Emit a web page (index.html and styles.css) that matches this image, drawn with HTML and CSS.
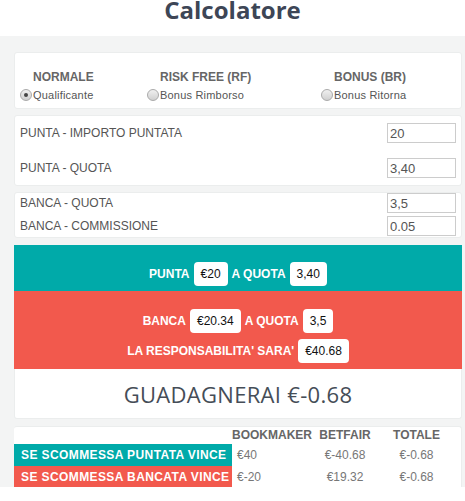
FILE: index.html
```html
<html lang="it">
<head>
    <meta charset="utf-8">
    <link rel="stylesheet" href="styles.css">
</head>
<body>
<div class="top">
    <h1>Calcolatore</h1>
</div>

<div class="calc">

    <div class="panel modes">
        <label class="mode m1">
            <b>NORMALE</b>
            <span><i class="radio on"></i>Qualificante</span>
        </label>
        <label class="mode m2">
            <b>RISK FREE (RF)</b>
            <span><i class="radio"></i>Bonus Rimborso</span>
        </label>
        <label class="mode m3">
            <b>BONUS (BR)</b>
            <span><i class="radio"></i>Bonus Ritorna</span>
        </label>
    </div>

    <div class="panel fields punta">
        <div class="row"><span>PUNTA - IMPORTO PUNTATA</span><input value="20"></div>
        <div class="row"><span>PUNTA - QUOTA</span><input value="3,40"></div>
    </div>

    <div class="panel fields banca">
        <div class="row"><span>BANCA - QUOTA</span><input value="3,5"></div>
        <div class="row"><span>BANCA - COMMISSIONE</span><input value="0.05"></div>
    </div>

    <div class="band teal">
        <div class="line">PUNTA <span class="pill">€20</span> A QUOTA <span class="pill">3,40</span></div>
    </div>
    <div class="band red">
        <div class="line">BANCA <span class="pill">€20.34</span> A QUOTA <span class="pill">3,5</span></div>
        <div class="line">LA RESPONSABILITA' SARA' <span class="pill">€40.68</span></div>
    </div>

    <div class="panel profit">GUADAGNERAI €-0.68</div>

    <div class="panel results">
        <div></div>
        <div class="th first">BOOKMAKER</div>
        <div class="th">BETFAIR</div>
        <div class="th">TOTALE</div>

        <div class="lab teal">SE SCOMMESSA PUNTATA VINCE</div>
        <div class="td first">€40</div>
        <div class="td">€-40.68</div>
        <div class="td">€-0.68</div>

        <div class="lab red">SE SCOMMESSA BANCATA VINCE</div>
        <div class="td first">€-20</div>
        <div class="td">€19.32</div>
        <div class="td">€-0.68</div>
    </div>

</div>
</body>
</html>
```

FILE: styles.css
```css
body {
    margin: 0;
    background: #fff;
    font-family: "Liberation Sans", Arial, sans-serif;
    color: #555;
}

.top {
    height: 36px;
    overflow: hidden;
}

h1 {
    margin: -7px 0 0;
    text-align: center;
    font-family: "Open Sans", sans-serif;
    font-size: 24px;
    font-weight: 700;
    line-height: 33px;
    color: #3d4656;
}

.calc {
    background: #f3f4f4;
    padding: 16px 3px 0 14px;
    display: flex;
    flex-direction: column;
}

.panel {
    background: #fff;
    border: 1px solid #ebeded;
    border-radius: 3px;
}

/* modes */
.modes {
    height: 57px;
    margin-bottom: 6px;
    display: grid;
    grid-template-columns: 127px 174px 1fr;
    padding: 16px 0 0 5px;
    box-sizing: border-box;
}

.mode {
    display: flex;
    flex-direction: column;
}

.mode b {
    font-size: 12px;
    line-height: 17px;
    color: #666;
    padding-left: 13px;
}

.mode span {
    display: flex;
    align-items: center;
    margin-top: 2px;
    font-size: 11px;
    line-height: 14px;
    letter-spacing: 0.2px;
    color: #555;
}

.radio {
    width: 12px;
    height: 12px;
    margin-right: 1px;
    border-radius: 50%;
    border: 1px solid #aaa;
    box-sizing: border-box;
    background: linear-gradient(#f0f0f0, #d0d0d0);
    position: relative;
}

.radio.on::after {
    content: "";
    position: absolute;
    left: 3px;
    top: 3px;
    width: 4px;
    height: 4px;
    border-radius: 50%;
    background: #444;
}

/* input rows */
.fields {
    display: flex;
    flex-direction: column;
    padding: 7px 5px 7px 5px;
}

.punta {
    gap: 15px;
    margin-bottom: 6px;
}

.banca {
    gap: 3px;
    padding-top: 0;
    padding-bottom: 1px;
    margin-bottom: 7px;
}

.row {
    display: flex;
    justify-content: space-between;
    align-items: center;
    font-size: 12px;
}

.row input {
    width: 69px;
    height: 20px;
    border: 1px solid #ccc;
    padding: 0 2px;
    box-sizing: border-box;
    font-family: "Liberation Sans", Arial, sans-serif;
    font-size: 13px;
    color: #555;
}

/* bands */
.band {
    display: flex;
    flex-direction: column;
    align-items: center;
    gap: 6px;
    color: #fff;
    font-weight: 700;
    font-size: 12px;
}

.teal {
    background: #00aaa9;
}

.red {
    background: #f2594d;
}

.band.teal {
    height: 46px;
    padding-top: 17px;
    box-sizing: border-box;
}

.band.red {
    height: 78px;
    padding-top: 18px;
    box-sizing: border-box;
}

.line {
    display: flex;
    align-items: center;
    gap: 4px;
}

.pill {
    background: #fff;
    color: #111;
    font-weight: 400;
    font-size: 12px;
    height: 24px;
    line-height: 24px;
    padding: 0 7px;
    border-radius: 4px;
}

.profit {
    height: 50px;
    margin-bottom: 7px;
    border-top: 0;
    border-radius: 0 0 3px 3px;
    box-sizing: border-box;
    display: flex;
    align-items: center;
    justify-content: center;
    font-family: "Open Sans", sans-serif;
    font-size: 22px;
    letter-spacing: 0.3px;
    color: #454d57;
}

/* results */
.results {
    height: 60px;
    border-bottom: 0;
    border-left: 0;
    border-radius: 3px 3px 0 0;
    display: grid;
    grid-template-columns: 218px 86px 54px 1fr;
    grid-template-rows: 17px 22px 21px;
    font-size: 12px;
}

.th {
    font-weight: 700;
    color: #666;
    text-align: center;
    line-height: 17px;
}

.td {
    color: #777;
    text-align: center;
    line-height: 22px;
}

.th.first {
    text-align: left;
}

.td.first {
    text-align: left;
    padding-left: 5px;
}

.lab {
    color: #fff;
    font-weight: 700;
    font-size: 12px;
    letter-spacing: 0.4px;
    white-space: nowrap;
    line-height: 22px;
    padding-left: 7px;
}
```
